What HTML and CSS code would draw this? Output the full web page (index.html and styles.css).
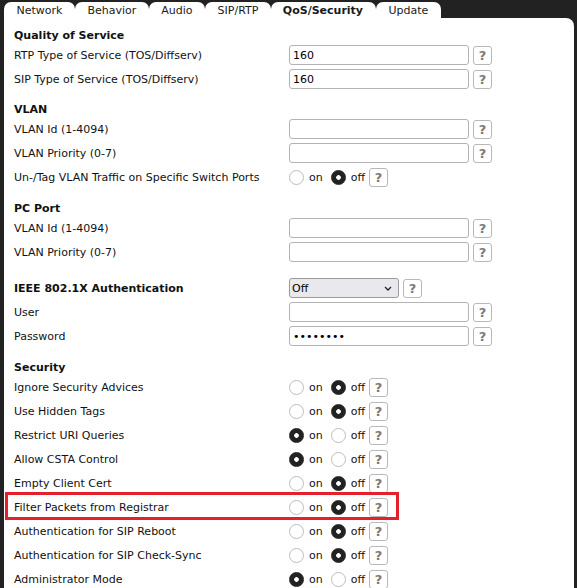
FILE: index.html
```html
<!DOCTYPE html>
<html>
<head>
<meta charset="utf-8">
<link rel="stylesheet" href="styles.css">
</head>
<body>
<div class="page">
  <div class="tabs">
    <div class="tab">Network</div>
    <div class="tab">Behavior</div>
    <div class="tab">Audio</div>
    <div class="tab">SIP/RTP</div>
    <div class="tab active">QoS/Security</div>
    <div class="tab">Update</div>
  </div>
  <div class="panel">
    <div class="sec-title first">Quality of Service</div>
    <div class="row"><span class="lbl">RTP Type of Service (TOS/Diffserv)</span><div class="ctl"><input class="txt" type="text" value="160"><span class="help">?</span></div></div>
    <div class="row"><span class="lbl">SIP Type of Service (TOS/Diffserv)</span><div class="ctl"><input class="txt" type="text" value="160"><span class="help">?</span></div></div>

    <div class="sec-title">VLAN</div>
    <div class="row"><span class="lbl">VLAN Id (1-4094)</span><div class="ctl"><input class="txt" type="text" value=""><span class="help">?</span></div></div>
    <div class="row"><span class="lbl">VLAN Priority (0-7)</span><div class="ctl"><input class="txt" type="text" value=""><span class="help">?</span></div></div>
    <div class="row"><span class="lbl">Un-/Tag VLAN Traffic on Specific Switch Ports</span><div class="ctl"><label class="opt"><input type="radio" name="tag">on</label><label class="opt"><input type="radio" name="tag" checked>off</label><span class="help">?</span></div></div>

    <div class="sec-title pc">PC Port</div>
    <div class="row"><span class="lbl">VLAN Id (1-4094)</span><div class="ctl"><input class="txt" type="text" value=""><span class="help">?</span></div></div>
    <div class="row"><span class="lbl">VLAN Priority (0-7)</span><div class="ctl"><input class="txt" type="text" value=""><span class="help">?</span></div></div>

    <div class="row ieee"><span class="lbl bold">IEEE 802.1X Authentication</span><div class="ctl"><span class="selwrap"><select class="sel"><option>Off</option></select><svg class="chev" width="8" height="5" viewBox="0 0 8 5"><path d="M1 1 L4 4 L7 1" fill="none" stroke="#222" stroke-width="1.3"/></svg></span><span class="help">?</span></div></div>
    <div class="row"><span class="lbl">User</span><div class="ctl"><input class="txt" type="text" value=""><span class="help">?</span></div></div>
    <div class="row"><span class="lbl">Password</span><div class="ctl"><input class="txt" type="password" value="12345678"><span class="help">?</span></div></div>

    <div class="sec-title sec">Security</div>
    <div class="row"><span class="lbl">Ignore Security Advices</span><div class="ctl"><label class="opt"><input type="radio" name="r1">on</label><label class="opt"><input type="radio" name="r1" checked>off</label><span class="help">?</span></div></div>
    <div class="row"><span class="lbl">Use Hidden Tags</span><div class="ctl"><label class="opt"><input type="radio" name="r2">on</label><label class="opt"><input type="radio" name="r2" checked>off</label><span class="help">?</span></div></div>
    <div class="row"><span class="lbl">Restrict URI Queries</span><div class="ctl"><label class="opt"><input type="radio" name="r3" checked>on</label><label class="opt"><input type="radio" name="r3">off</label><span class="help">?</span></div></div>
    <div class="row"><span class="lbl">Allow CSTA Control</span><div class="ctl"><label class="opt"><input type="radio" name="r4" checked>on</label><label class="opt"><input type="radio" name="r4">off</label><span class="help">?</span></div></div>
    <div class="row"><span class="lbl">Empty Client Cert</span><div class="ctl"><label class="opt"><input type="radio" name="r5">on</label><label class="opt"><input type="radio" name="r5" checked>off</label><span class="help">?</span></div></div>
    <div class="row marked"><span class="lbl">Filter Packets from Registrar</span><div class="ctl"><label class="opt"><input type="radio" name="r6">on</label><label class="opt"><input type="radio" name="r6" checked>off</label><span class="help">?</span></div></div>
    <div class="row"><span class="lbl">Authentication for SIP Reboot</span><div class="ctl"><label class="opt"><input type="radio" name="r7">on</label><label class="opt"><input type="radio" name="r7" checked>off</label><span class="help">?</span></div></div>
    <div class="row"><span class="lbl">Authentication for SIP Check-Sync</span><div class="ctl"><label class="opt"><input type="radio" name="r8">on</label><label class="opt"><input type="radio" name="r8" checked>off</label><span class="help">?</span></div></div>
    <div class="row"><span class="lbl">Administrator Mode</span><div class="ctl"><label class="opt"><input type="radio" name="r9" checked>on</label><label class="opt"><input type="radio" name="r9">off</label><span class="help">?</span></div></div>
  </div>
</div>
</body>
</html>
```
FILE: styles.css
```css
html, body {
  margin: 0;
  padding: 0;
  background: #222222;
  height: 100%;
  overflow: hidden;
}
body {
  font-family: "DejaVu Sans", Verdana, sans-serif;
  font-size: 11px;
  color: #111;
}
.page {
  padding: 2px 3px 0 4px;
}
.tabs {
  display: flex;
  height: 16px;
}
.tab {
  background: #fff;
  border-radius: 7px 7px 0 0;
  padding: 0 12.5px;
  line-height: 17px;
  color: #1a1a1a;
}
.tab.active {
  font-weight: bold;
  padding: 0 13px 0 12px;
}
.panel {
  background: #fff;
  border-radius: 0 8px 0 0;
  padding: 11px 0 0 10px;
  height: 800px;
}
.sec-title {
  font-weight: bold;
  height: 14px;
  line-height: 14px;
  margin-top: 12px;
}
.sec-title.first { margin-top: 0; }
.sec-title.pc { margin-top: 13px; }
.sec-title.sec { margin-top: 13px; }
.row {
  display: grid;
  grid-template-columns: 275px auto;
  align-items: center;
  height: 24px;
}
.row.ieee { margin-top: 12px; }
.row.marked { position: relative; }
.row.marked::after {
  content: "";
  position: absolute;
  left: -9px;
  top: -3px;
  width: 388px;
  height: 22px;
  border: 3px solid #e3202b;
  pointer-events: none;
}
.lbl.bold { font-weight: bold; }
.ctl {
  display: flex;
  align-items: center;
}
.txt {
  box-sizing: border-box;
  width: 180px;
  height: 20px;
  margin: 0;
  border: 1px solid #b3b3b3;
  border-radius: 3px;
  padding: 0 3px;
  font-family: "DejaVu Sans", Verdana, sans-serif;
  font-size: 11px;
  color: #000;
  outline: none;
}
.help {
  box-sizing: border-box;
  width: 19px;
  height: 19px;
  margin-left: 4px;
  border: 1px solid #b8b8b8;
  border-radius: 3px;
  display: flex;
  align-items: center;
  justify-content: center;
  font-weight: bold;
  font-size: 13px;
  color: #7a7a7a;
}
.opt {
  display: flex;
  align-items: center;
  gap: 5px;
  margin-right: 8px;
}
.opt:last-of-type { margin-right: 0; }
.opt input {
  appearance: none;
  -webkit-appearance: none;
  box-sizing: border-box;
  width: 15px;
  height: 15px;
  margin: 0;
  border: 1px solid #bdbdbd;
  border-radius: 50%;
  background: #fff;
}
.opt input:checked {
  border-color: #222;
  background: radial-gradient(circle, #fff 0 2px, #222 2.6px);
}
.selwrap {
  position: relative;
  display: flex;
}
.sel {
  appearance: none;
  -webkit-appearance: none;
  box-sizing: border-box;
  width: 110px;
  height: 20px;
  margin: 0;
  border: 1px solid #9a9a9a;
  border-radius: 3px;
  background: #e9e9ed;
  padding: 0 2px;
  font-family: "DejaVu Sans", Verdana, sans-serif;
  font-size: 11px;
  color: #000;
}
.chev {
  position: absolute;
  right: 7px;
  top: 8px;
}
```
